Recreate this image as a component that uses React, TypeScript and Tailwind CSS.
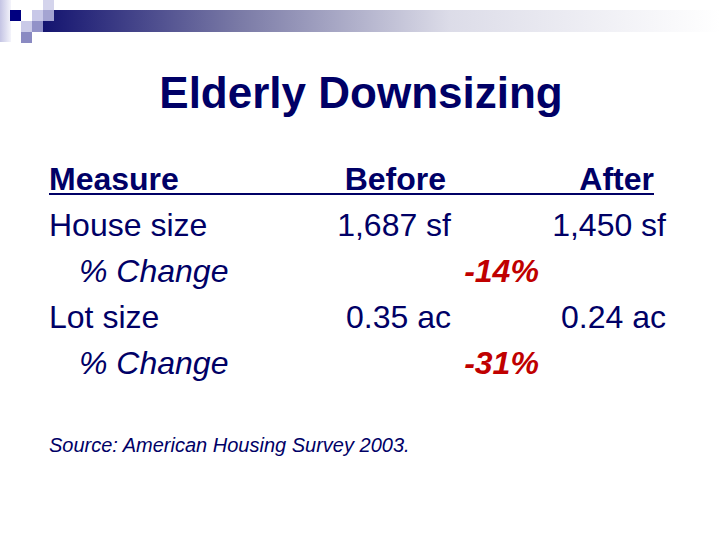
import React from 'react'

const rows = [
  { label: 'House size', before: '1,687 sf', after: '1,450 sf', change: '' },
  { label: '% Change', before: '', after: '', change: '-14%', italic: true },
  { label: 'Lot size', before: '0.35 ac', after: '0.24 ac', change: '' },
  { label: '% Change', before: '', after: '', change: '-31%', italic: true },
]

function HeaderBar() {
  return (
    <svg width="720" height="45" viewBox="0 0 720 45" className="block">
      <defs>
        <linearGradient id="bar" x1="0" x2="1" y1="0" y2="0">
          <stop offset="0" stopColor="#141470" />
          <stop offset="0.29" stopColor="#7a7aa6" />
          <stop offset="0.6" stopColor="#dcdce8" />
          <stop offset="1" stopColor="#ffffff" />
        </linearGradient>
        <linearGradient id="strip" x1="0" x2="1" y1="0" y2="0">
          <stop offset="0" stopColor="#c4c4e4" />
          <stop offset="1" stopColor="#f4f4fb" />
        </linearGradient>
      </defs>
      <rect x="43" y="10" width="677" height="22" fill="url(#bar)" />
      <rect x="0" y="0" width="11" height="42" fill="url(#strip)" />
      <rect x="10" y="10" width="11" height="11" fill="#000080" />
      <rect x="32" y="10" width="11" height="11" fill="#c8c8e8" />
      <rect x="43" y="0" width="11" height="10" fill="#d4d4ec" />
      <rect x="43" y="10" width="11" height="11" fill="#a4a4d2" />
      <rect x="21" y="21" width="11" height="11" fill="#cacae8" />
      <rect x="32" y="21" width="11" height="11" fill="#9292c8" />
      <rect x="21" y="32" width="11" height="11" fill="#8a8ac2" />
    </svg>
  )
}

export default function App() {
  return (
    <div className="w-[720px] h-[540px] bg-white overflow-hidden font-['Liberation_Sans',Arial,sans-serif] text-[#000066]">
      <HeaderBar />

      <h1 className="mt-[26px] text-center text-[44px] leading-[44px] font-bold pl-[2px]">
        Elderly Downsizing
      </h1>

      <div className="mt-[41px] pl-[49px] text-[32px] leading-[46px]">
        {/* Header row */}
        <div className="flex w-[605px] h-[39px] border-b-2 border-[#000066] font-bold mb-[7px]">
          <div className="w-[280px]">Measure</div>
          <div className="w-[117px] text-right">Before</div>
          <div className="flex-1 text-right">After</div>
        </div>

        {rows.map((row, i) => (
          <div key={i} className="flex h-[46px]">
            <div className={row.italic ? 'w-[280px] pl-[30px] italic' : 'w-[280px]'}>{row.label}</div>
            <div className="w-[122px] text-right">{row.before}</div>
            <div className="ml-[8px] w-[85px] text-center font-bold italic text-[#c00000]">{row.change}</div>
            <div className="w-[122px] text-right">{row.after}</div>
          </div>
        ))}
      </div>

      <p className="mt-[49px] pl-[49px] text-[20px] leading-[20px] italic">
        Source: American Housing Survey 2003.
      </p>
    </div>
  )
}
